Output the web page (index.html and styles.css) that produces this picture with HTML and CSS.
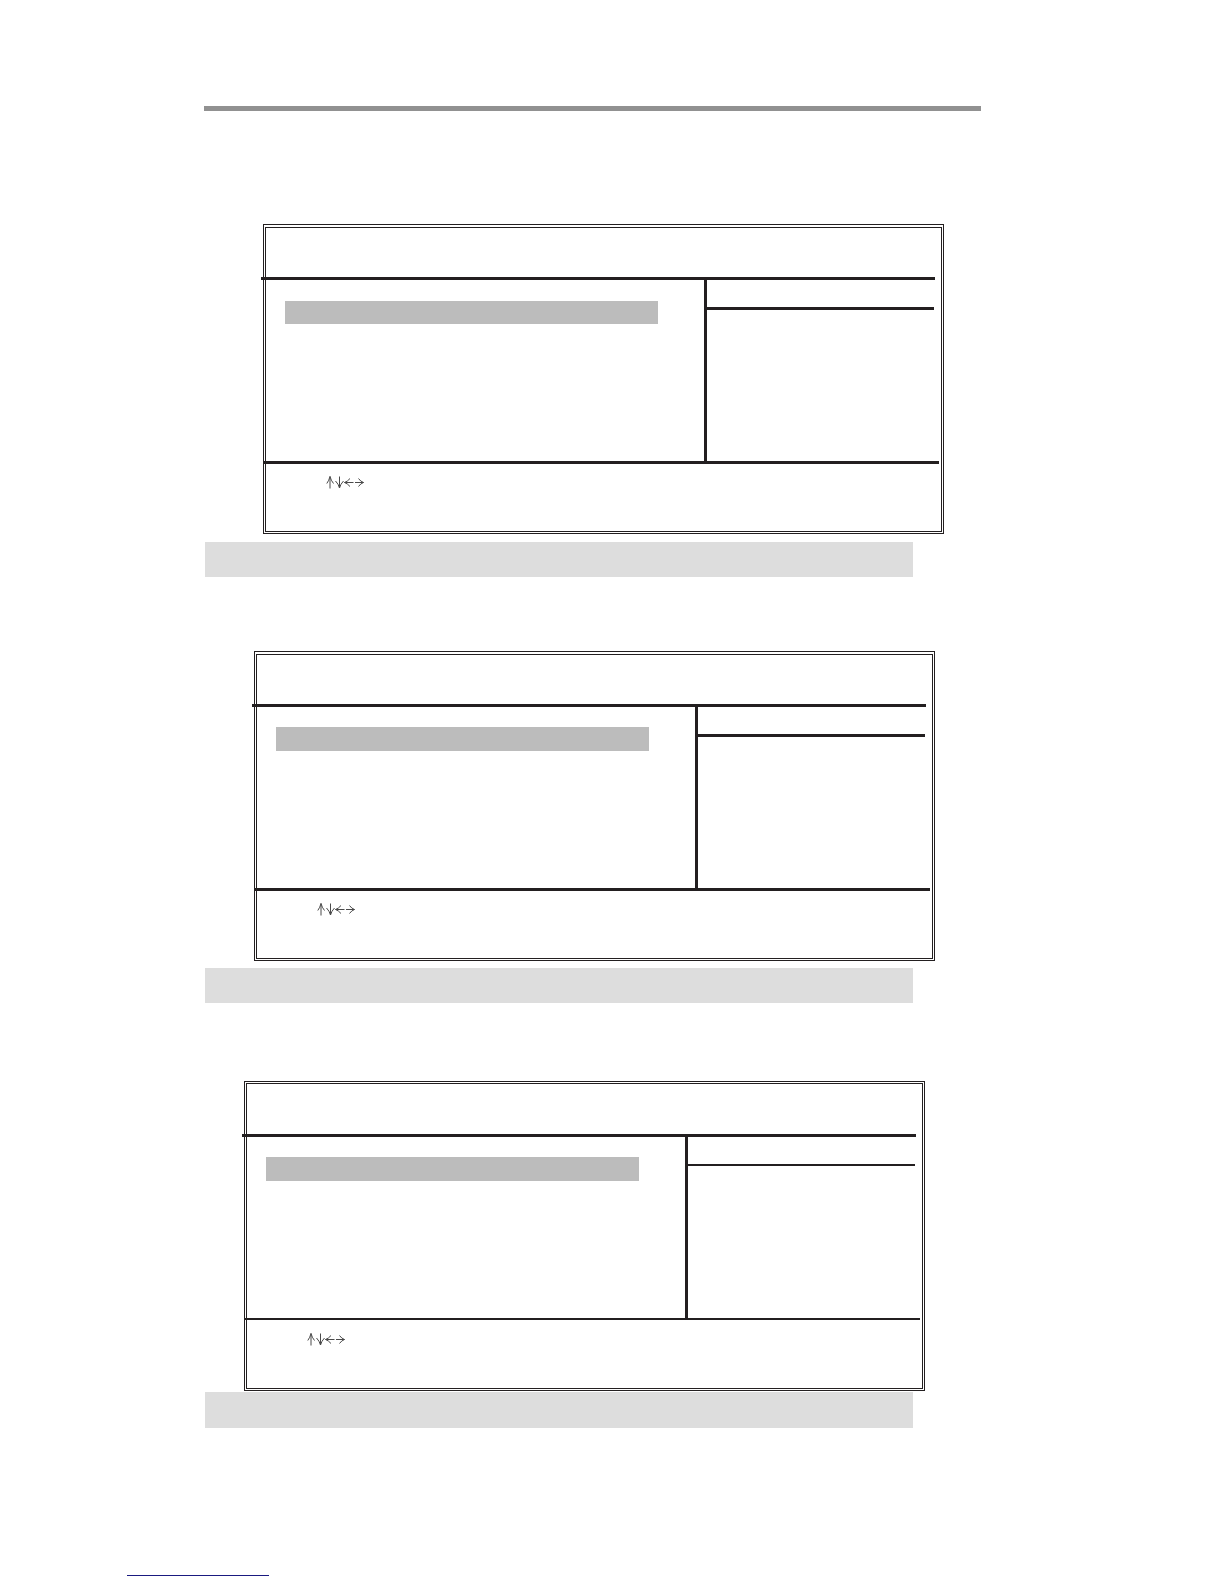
FILE: index.html
```html
<!DOCTYPE html>
<html lang="en">
<head>
    <meta charset="UTF-8">
    <meta name="viewport" content="width=device-width, initial-scale=1.0">
    <title>Setup Menus</title>
    <link rel="stylesheet" href="styles.css">
</head>
<body>
    <main class="page">
        <hr class="top-rule">

        <section class="menu menu-first">
            <div class="screen">
                <div class="screen-title"></div>
                <div class="screen-body">
                    <div class="options">
                        <div class="selected"></div>
                    </div>
                    <div class="help">
                        <div class="help-title"></div>
                    </div>
                </div>
                <div class="keys">
                    <svg class="arrows" viewBox="0 0 38 13" role="img" aria-label="Arrow keys">
                        <path id="arrow-keys" d="M4 12.5V.5M.8 7.5Q3 4.5 4 .5Q5 4.5 7.5 7.5M13.5.5V12M9.5 5Q12.5 8 13.5 12Q14.500 8 17.500 5M27.500 6.500H18.500M24 2.500Q21.500 5.500 18.500 6.500Q21.500 7.500 24 10.500M29 6.500H37.500M32.500 2.500Q34.500 5.500 37.500 6.500Q34.500 7.500 32.500 10.500"/>
                    </svg>
                </div>
            </div>
        </section>
        <div class="note"></div>

        <section class="menu menu-second">
            <div class="screen">
                <div class="screen-title"></div>
                <div class="screen-body">
                    <div class="options">
                        <div class="selected"></div>
                    </div>
                    <div class="help">
                        <div class="help-title"></div>
                    </div>
                </div>
                <div class="keys">
                    <svg class="arrows" viewBox="0 0 38 13" role="img" aria-label="Arrow keys">
                        <use href="#arrow-keys"/>
                    </svg>
                </div>
            </div>
        </section>
        <div class="note"></div>

        <section class="menu menu-third">
            <div class="screen">
                <div class="screen-title"></div>
                <div class="screen-body">
                    <div class="options">
                        <div class="selected"></div>
                    </div>
                    <div class="help">
                        <div class="help-title"></div>
                    </div>
                </div>
                <div class="keys">
                    <svg class="arrows" viewBox="0 0 38 13" role="img" aria-label="Arrow keys">
                        <use href="#arrow-keys"/>
                    </svg>
                </div>
            </div>
        </section>
        <div class="note"></div>
    </main>

    <footer class="page-footer">
        <div class="footer-line"></div>
    </footer>
</body>
</html>
```
FILE: styles.css
```css
* {
    box-sizing: border-box;
}

body {
    margin: 0;
    background: #fff;
    color: #231f20;
    font-family: "Liberation Serif", "Times New Roman", serif;
}

.page {
    padding: 106px 243px 0 204px;
}

.top-rule {
    height: 5px;
    margin: 0;
    border: none;
    background: #919191;
}

/* double frame: outer line here, inner line on .screen */
.menu {
    padding: 2px 1px 1px;
    border: 1px solid #231f20;
}

.menu-first {
    margin: 113px 37px 8px 59px;
}

.menu-second {
    margin: 74px 46px 7px 50px;
}

.menu-third {
    margin: 78px 56px 1px 40px;
    padding-top: 1px;
}

.screen {
    border: 1px solid #231f20;
}

/* the rules run past the frame on the left and stop short on the right */
.screen-title {
    height: 52px;
    margin: 0 6px 0 -5px;
    border-bottom: 3px solid #231f20;
}

.menu-third .screen-title {
    height: 53px;
}

.screen-body {
    display: flex;
    min-height: 181px;
    margin-right: 7px;
}

.options {
    flex: 1;
    padding: 21px 46px 0 19px;
}

.selected {
    height: 23px;
    background: #bcbcbc;
}

.menu-second .options,
.menu-third .options {
    padding-top: 20px;
}

.menu-second .selected,
.menu-third .selected {
    height: 24px;
}

.help {
    width: 230px;
    border-left: 3px solid #231f20;
}

.help-title {
    height: 30px;
    border-bottom: 3px solid #231f20;
}

.keys {
    height: 70px;
    margin: 0 2px 0 -2px;
    padding: 12px 0 0 62px;
    border-top: 3px solid #231f20;
}

.arrows {
    display: block;
    width: 38px;
    height: 13px;
    fill: none;
    stroke: #4a4a4a;
    stroke-width: 1;
}

.menu-third .help-title {
    height: 29px;
    border-bottom-width: 2px;
}

.menu-third .keys {
    padding-top: 13px;
    border-top-width: 2px;
}

.note {
    height: 35px;
    margin: 0 68px 0 1px;
    background: #ddd;
}

.menu-third + .note {
    height: 36px;
}

.page-footer {
    padding: 147px 0 8px 127px;
}

.footer-line {
    width: 142px;
    border-bottom: 1px solid #1a1a80;
}
```
